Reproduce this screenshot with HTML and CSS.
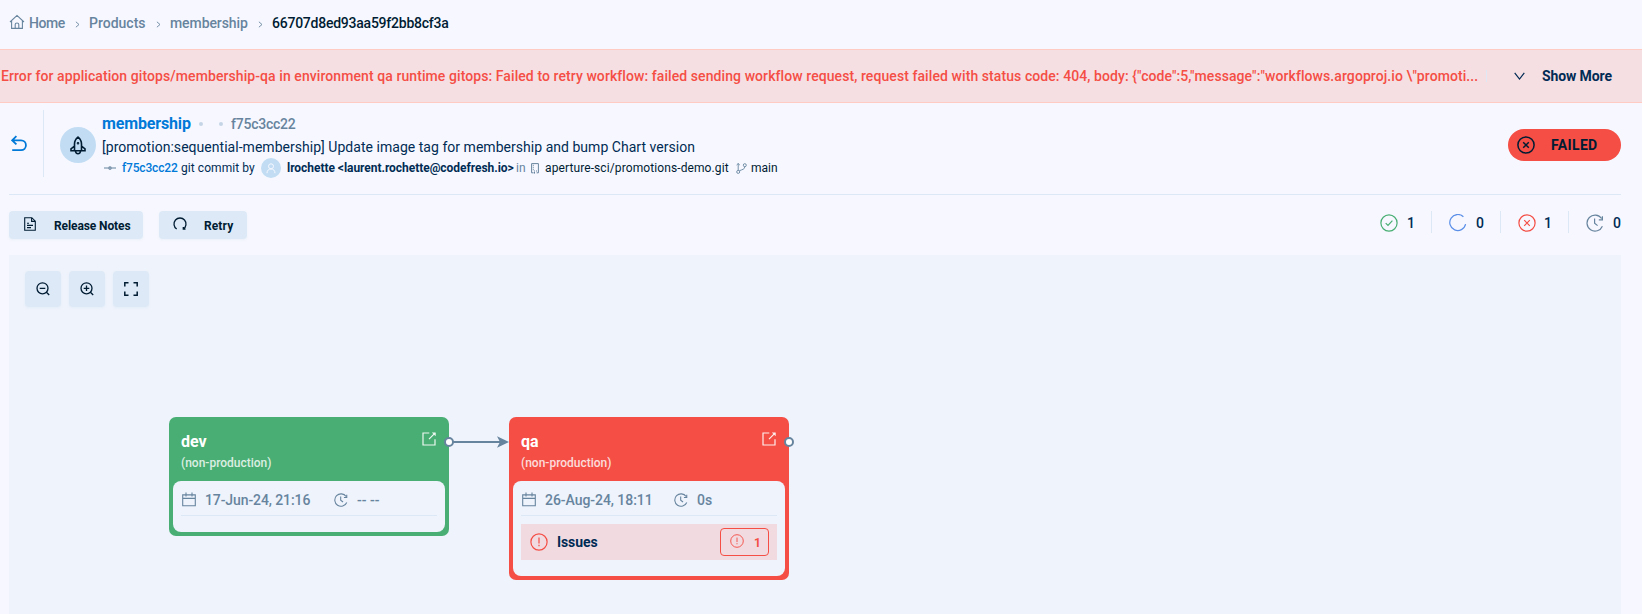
FILE: index.html
```html
<!DOCTYPE html>
<html lang="en">
<head>
<meta charset="utf-8">
<title>membership</title>
<link rel="stylesheet" href="styles.css">
</head>
<body>
<svg class="defs" width="0" height="0" aria-hidden="true">
  <symbol id="chev" viewBox="0 0 5 7"><path d="M.9.8 4 3.5.9 6.2"/></symbol>
  <symbol id="check" viewBox="0 0 18 18"><circle cx="9" cy="9" r="8.1"/><path d="M5.7 9.2 8 11.5 12.4 6.6"/></symbol>
  <symbol id="fail" viewBox="0 0 18 18"><circle cx="9" cy="9" r="8.1"/><path d="M6.2 6.2 11.8 11.8M11.8 6.2 6.2 11.8"/></symbol>
  <symbol id="alert" viewBox="0 0 18 18"><circle cx="9" cy="9" r="8.1"/><path d="M9 4.6V10.4M9 11.8V13.2"/></symbol>
  <symbol id="clock" viewBox="0 0 18 18"><path d="M16.4 12.2A8 8 0 1 1 15.6 4.5M16.4 2.2V5.8H12.8M8.6 4.6V9.2L11.6 11.6"/></symbol>
  <symbol id="calendar" viewBox="0 0 14 15"><path d="M.7 2.9H13.3V13.7H.7ZM.7 6.4H13.3M4 .6V4.4M10 .6V4.4"/></symbol>
  <symbol id="external" viewBox="0 0 14 14"><path d="M7.3 1H1V13H13V7.2"/><path d="M7 7.2 13 1.2"/><path class="tip" d="M9.8.4H13.7V4.2Z"/></symbol>
</svg>

<nav class="breadcrumbs">
  <svg class="icon home" viewBox="0 0 16 16"><path d="M1 8 8 1.4 15 8M2.6 6.6V14.4H13.4V6.6M6.2 14.2V10.6Q6.2 9 8 9Q9.8 9 9.8 10.6V14.2"/></svg>
  <a class="crumb crumb-home">Home</a>
  <svg class="icon chev"><use href="#chev"/></svg>
  <a class="crumb crumb-products">Products</a>
  <svg class="icon chev"><use href="#chev"/></svg>
  <a class="crumb crumb-product">membership</a>
  <svg class="icon chev"><use href="#chev"/></svg>
  <span class="crumb current">66707d8ed93aa59f2bb8cf3a</span>
</nav>

<section class="banner">
  <p class="banner-text">Error for application gitops/membership-qa in environment qa runtime gitops: Failed to retry workflow: failed sending workflow request, request failed with status code: 404, body: {"code":5,"message":"workflows.argoproj.io \"promoti...</p>
  <span class="banner-sep"></span>
  <svg class="icon more-chev" viewBox="0 0 11 8"><path d="M.7.8 5.5 7 10.3.8"/></svg>
  <span class="more">Show More</span>
</section>

<main class="page">
  <header class="summary">
    <div class="back"><svg class="icon" viewBox="0 0 16 17"><path d="M5.4 1.2 1.2 5.3 5.4 9.4M1.5 5.3H10A4.8 4.8 0 0 1 10 15.2H1.2"/></svg></div>
    <div class="rocket"><svg class="icon" viewBox="0 0 16 19"><path d="M8 1.1C5.6 3 4.5 5.3 4.5 8V14.7H11.5V8C11.5 5.3 10.4 3 8 1.1ZM4.5 10 1 12.8V14.7H4.5M11.5 10 15 12.8V14.7H11.5M5.3 14.9Q6 17.8 8 17.8Q10 17.8 10.7 14.9"/><circle cx="8" cy="7.3" r=".5"/></svg></div>
    <div class="meta">
      <div class="meta-top"><a class="product">membership</a><i class="dot"></i><i class="dot"></i><span class="sha">f75c3cc22</span></div>
      <div class="title">[promotion:sequential-membership] Update image tag for membership and bump Chart version</div>
      <div class="commit">
        <svg class="icon commit-icon" viewBox="0 0 12 6"><path d="M0 3H4.5M7.5 3H12"/><circle cx="6" cy="3" r="1.2"/></svg>
        <a class="commit-sha">f75c3cc22</a>
        <span class="commit-by">git commit by</span>
        <span class="avatar"><svg class="icon" viewBox="0 0 10 11"><circle cx="5" cy="3.3" r="2.5"/><path d="M1 10.2C1 7.5 2.6 6 5 6S9 7.5 9 10.2"/></svg></span>
        <b class="author">lrochette &lt;laurent.rochette@codefresh.io&gt;</b>
        <span class="in">in</span>
        <svg class="icon repo" viewBox="0 0 8 11"><path d="M2.6 9.8H.6V.6H7.4V9.8H5.6"/><path class="dash" d="M2.3 1.8V8M3 8H7"/><path d="M3.5 9V10.6"/></svg>
        <span class="repo-name">aperture-sci/promotions-demo.git</span>
        <svg class="icon branch" viewBox="0 0 11 11"><circle cx="2.2" cy="8.9" r="1.5"/><circle cx="8.8" cy="2.2" r="1.5"/><path d="M2.2 7.3V.5M.6 2 2.2.5 3.8 2M8.8 3.7C8.8 6.5 6 6.5 3.3 7.8"/></svg>
        <span class="branch-name">main</span>
      </div>
    </div>
    <div class="status"><svg class="icon"><use href="#fail"/></svg><span>FAILED</span></div>
  </header>

  <div class="toolbar">
    <button class="btn notes"><svg class="icon" viewBox="0 0 12 14"><path d="M.7.7H7.8L11.3 4.2V13.3H.7ZM7.6.9V4.4H11.2M3 6.2H5M3 8.4H9M3 10.6H7"/></svg><span>Release Notes</span></button>
    <button class="btn retry"><svg class="icon" viewBox="0 0 14 14"><path d="M3.7 12A6 6 0 1 1 10.3 12M10.3 10V12.2H12.5"/></svg><span>Retry</span></button>
    <div class="counts">
      <div class="count ok"><svg class="icon"><use href="#check"/></svg><span>1</span></div>
      <div class="count running"><svg class="icon" viewBox="0 0 18 18"><path d="M14.4 2.8A8 8 0 1 0 16.6 10.2"/></svg><span>0</span></div>
      <div class="count failed"><svg class="icon"><use href="#fail"/></svg><span>1</span></div>
      <div class="count pending"><svg class="icon"><use href="#clock"/></svg><span>0</span></div>
    </div>
  </div>

  <section class="canvas">
    <div class="zoom">
      <button class="btn"><svg class="icon" viewBox="0 0 14 14"><circle cx="6.5" cy="6.3" r="5.5"/><path d="M10.4 10.2 13.2 13M3.7 6.3H9.3"/></svg></button>
      <button class="btn"><svg class="icon" viewBox="0 0 14 14"><circle cx="6.5" cy="6.3" r="5.5"/><path d="M10.4 10.2 13.2 13M3.7 6.3H9.3M6.5 3.5V9.1"/></svg></button>
      <button class="btn"><svg class="icon full" viewBox="0 0 14 14"><path d="M.8 4.5V.8H4.5M9.5.8H13.2V4.5M13.2 9.5V13.2H9.5M4.5 13.2H.8V9.5"/></svg></button>
    </div>

    <article class="node dev">
      <div class="node-head"><div><h3>dev</h3><p>(non-production)</p></div><svg class="icon"><use href="#external"/></svg></div>
      <div class="node-body">
        <div class="times"><svg class="icon cal"><use href="#calendar"/></svg><span class="date">17-Jun-24, 21:16</span><svg class="icon clk"><use href="#clock"/></svg><span class="dur">-- --</span></div>
      </div>
    </article>

    <article class="node qa">
      <div class="node-head"><div><h3>qa</h3><p>(non-production)</p></div><svg class="icon"><use href="#external"/></svg></div>
      <div class="node-body">
        <div class="times"><svg class="icon cal"><use href="#calendar"/></svg><span class="date">26-Aug-24, 18:11</span><svg class="icon clk"><use href="#clock"/></svg><span class="dur">0s</span></div>
        <div class="issues"><svg class="icon"><use href="#alert"/></svg><b>Issues</b><span class="badge"><svg class="icon"><use href="#alert"/></svg>1</span></div>
      </div>
    </article>

    <svg class="edges" viewBox="0 0 360 12">
      <path class="line" d="M14 6H68"/>
      <path class="arrow" d="M62 .2 74 6 62 11.8 65 6Z"/>
      <circle cx="14" cy="6" r="4"/>
      <circle cx="354" cy="6" r="4"/>
    </svg>
  </section>
</main>
</body>
</html>
```

FILE: styles.css
```css
* { box-sizing: border-box; }
body {
  margin: 0;
  height: 614px;
  overflow: hidden;
  display: flex;
  flex-direction: column;
  background: #f7f8ff;
  color: #002b54;
  font: 14px/20px Roboto, sans-serif;
}
p, h3 { margin: 0; }
span, a, b, p { white-space: nowrap; }
.defs { position: absolute; }
.icon { display: block; flex: none; fill: none; stroke: currentColor; stroke-width: 1.2; }

.breadcrumbs {
  flex: none;
  height: 49px;
  padding: 0 0 3px 9px;
  display: flex;
  align-items: center;
  color: #67849e;
  font-weight: 500;
}
.home { width: 16px; height: 16px; margin-right: 4px; margin-top: -2px; stroke-width: 1.1; }
.chev { width: 5px; height: 7px; margin: 3px 9px 0 10px; stroke-width: .9; }
.crumb-home { width: 36px; letter-spacing: -.4px; }
.crumb-products { width: 57px; }
.crumb-product { width: 78px; letter-spacing: -.08px; }
.current { color: #001c33; letter-spacing: -.24px; }

.banner {
  flex: none;
  height: 54px;
  display: flex;
  align-items: center;
  background: #f6dfe3;
  border: solid #ffcbc3;
  border-width: 1px 0;
}
.banner-text { width: 1486px; padding-left: 1px; color: #f44e45; font-weight: 500; letter-spacing: .079px; }
.banner-sep { width: 1px; height: 12px; background: #e0e8f5; }
.more-chev { width: 11px; height: 8px; margin-left: 27px; margin-right: 17px; }
.more { font-weight: 700; letter-spacing: -.1px; }

.page { flex: 1; display: flex; flex-direction: column; padding: 0 21px 0 9px; }
.summary { flex: none; height: 92px; display: flex; border-bottom: 1px solid #dce8f6; }
.back { width: 35px; height: 67px; margin-top: 7px; padding: 25px 0 0 2px; border-right: 1px solid #dce8f6; color: #0079d8; }
.back .icon { width: 16px; height: 17px; stroke-width: 1.8; }
.rocket { width: 36px; height: 36px; margin: 24px 6px 0 16px; border-radius: 50%; background: #c1dcf3; color: #001c33; display: grid; place-items: center; }
.rocket .icon { width: 16px; height: 19px; stroke-width: 1.6; }
.meta { padding-top: 12px; }
.meta-top { display: flex; align-items: center; height: 18px; margin-bottom: 4px; }
.product { width: 97px; color: #0079d8; font-size: 16px; font-weight: 700; letter-spacing: -.15px; }
.dot { width: 4px; height: 4px; margin-right: 16px; border-radius: 50%; background: #c5d5e5; }
.dot + .dot { margin-right: 8px; }
.sha { color: #67849e; font-weight: 500; letter-spacing: -.24px; }
.title { letter-spacing: .032px; }
.commit { height: 20px; display: flex; align-items: center; font-size: 12px; margin-top: 1px; }
.commit-icon { width: 12px; height: 6px; margin: 0 6px 0 2px; color: #67849e; }
.commit-sha { width: 59px; color: #0079d8; font-weight: 500; letter-spacing: -.17px; }
.commit-by { width: 80px; letter-spacing: .06px; }
.avatar { width: 20px; height: 20px; border-radius: 50%; background: #c1dcf3; color: #f7f8ff; display: grid; place-items: center; margin-right: 6px; }
.avatar .icon { width: 10px; height: 11px; stroke-width: 1; }
.author { width: 229px; letter-spacing: -.04px; }
.in { width: 15px; color: #67849e; }
.repo { width: 8px; height: 11px; color: #67849e; margin-right: 6px; stroke-width: 1; }
.repo .dash { stroke-dasharray: 1 1; }
.repo-name { width: 191px; letter-spacing: .1px; color: #001c33; }
.branch { width: 11px; height: 11px; margin-right: 4px; color: #67849e; stroke-width: .9; }
.branch-name { color: #001c33; }
.status {
  width: 113px;
  height: 32px;
  margin: 26px 0 0 auto;
  padding-left: 9px;
  display: flex;
  align-items: center;
  gap: 16px;
  border-radius: 16px;
  background: #f44e45;
  color: #001c33;
  font-weight: 700;
  letter-spacing: .35px;
}
.status .icon { width: 18px; height: 18px; stroke-width: 1.5; }

.toolbar { flex: none; height: 60px; display: flex; align-items: flex-start; padding-top: 16px; }
.btn { border: 0; border-radius: 4px; background: #dde9f6; color: #001c33; box-shadow: 0 1px 2px #dde9f680; font: 700 12px/20px Roboto, sans-serif; padding: 0; display: flex; align-items: center; }
.btn span { padding-top: 1px; }
.notes { width: 134px; height: 28px; padding-left: 15px; margin-right: 16px; letter-spacing: -.1px; }
.notes .icon { width: 12px; height: 14px; margin: -3px 18px 0 0; stroke-width: 1.1; }
.retry { width: 88px; height: 28px; padding-left: 14px; letter-spacing: .1px; }
.retry .icon { width: 14px; height: 14px; margin: -3px 17px 0 0; stroke-width: 1.3; }
.counts { margin-left: auto; display: flex; }
.count { height: 22px; display: flex; align-items: center; justify-content: space-between; width: 68px; padding: 2px 16px 0 17px; border-right: 1px solid #dce8f6; font-weight: 500; }
.count .icon { width: 18px; height: 18px; }
.count.ok { padding-left: 0; width: 52px; }
.count.running { width: 69px; }
.count.pending { border: 0; width: 52px; padding: 2px 0 0 17px; }
.ok .icon { color: #48ae73; }
.running .icon { color: #5b8fe8; }
.failed .icon { color: #f44e45; }
.pending .icon { color: #67849e; }

.canvas { position: relative; flex: 1; background: #eef3fc; }
.zoom { display: flex; gap: 8px; padding: 16px; }
.zoom .btn { width: 36px; height: 36px; justify-content: center; }
.zoom .icon { width: 14px; height: 14px; stroke-width: 1.3; }
.zoom .full { stroke-width: 1.5; }
.node { position: absolute; top: 162px; width: 280px; padding: 0 4px 4px; border-radius: 7px; }
.dev { left: 160px; height: 119px; background: #48ae73; }
.qa { left: 500px; height: 163px; background: #f44e45; }
.node-head { height: 64px; padding: 15px 9px 0 8px; display: flex; justify-content: space-between; color: #fff; }
.node-head h3 { font-size: 16px; line-height: 20px; }
.node-head p { font-size: 12px; font-weight: 500; margin-top: 1px; opacity: .8; }
.node-head .icon { width: 14px; height: 14px; opacity: .9; }
.tip { fill: currentColor; stroke: none; }
.node-body { border-radius: 8px; background: #eef3fc; padding: 0 8px; }
.dev .node-body { height: 51px; }
.qa .node-body { height: 95px; }
.times { height: 35px; border-bottom: 1px solid #dce8f6; display: flex; align-items: center; padding-top: 3px; color: #67849e; font-weight: 500; }
.cal { width: 14px; height: 15px; margin: 0 9px 0 1px; stroke-width: 1.1; }
.date { width: 129px; letter-spacing: -.1px; }
.qa .date { letter-spacing: -.05px; }
.clk { width: 14px; height: 14px; margin-right: 9px; stroke-width: 1.4; }
.issues { margin-top: 8px; height: 36px; padding: 0 8px 0 9px; display: flex; align-items: center; background: #f1dbe1; }
.issues .icon { width: 18px; height: 18px; margin-right: 9px; color: #f44e45; }
.issues b { letter-spacing: -.1px; }
.issues .badge { margin-left: auto; width: 49px; height: 28px; border: 1px solid #f44e45; border-radius: 4px; display: flex; align-items: center; padding: 1px 0 0 9px; color: #f44e45; font-size: 12px; font-weight: 700; }
.issues .badge .icon { width: 14px; height: 14px; margin: -3px 10px 0 0; }
.edges { position: absolute; left: 426px; top: 181px; width: 360px; height: 12px; }
.edges circle { fill: #fff; stroke: #67849e; stroke-width: 2; }
.line { stroke: #67849e; stroke-width: 2; }
.arrow { fill: #67849e; }
```
